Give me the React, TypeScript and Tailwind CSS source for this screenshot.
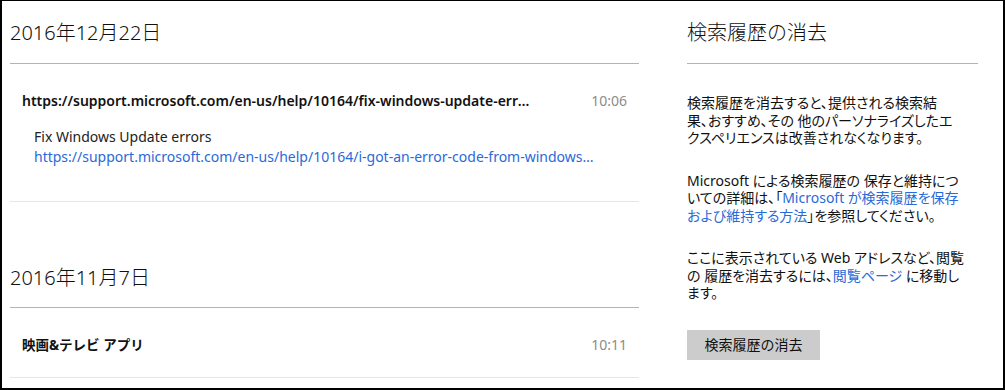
import React from "react";

const font = "font-['Noto_Sans','Noto_Sans_CJK_JP',sans-serif]";

function DateHeading({ children }: { children: React.ReactNode }) {
  return <div className="text-[20px] leading-[28px] font-light text-[#111]">{children}</div>;
}

export default function App() {
  return (
    <div className={`${font} w-[1005px] h-[390px] bg-white border-black border-l-2 border-r-2 border-t border-b-2 flex text-[#111] overflow-hidden`}>
      {/* Left column */}
      <div className="ml-[8px] w-[629px] flex flex-col">
        <div className="pt-[18px]">
          <DateHeading>2016年12月22日</DateHeading>
        </div>
        <div className="mt-[16px] h-px bg-[#b4b4b4]" />
        <div className="pt-[27px] pl-[12px] pr-[12px] flex items-center justify-between">
          <div className="w-[508px] truncate text-[14px] leading-[20px] font-semibold text-[#111]">
            https://support.microsoft.com/en-us/help/10164/fix-windows-update-errors
          </div>
          <div className="text-[14px] leading-[20px] text-[#8c8c8c]">10:06</div>
        </div>
        <div className="pl-[24px] mt-[16px] flex flex-col">
          <div className="text-[14px] leading-[20px] text-[#222]">Fix Windows Update errors</div>
          <div className="w-[564px] truncate text-[14px] leading-[20px] text-[#2a6ad8]">
            https://support.microsoft.com/en-us/help/10164/i-got-an-error-code-from-windows-update
          </div>
        </div>
        <div className="mt-[34px] h-px bg-[#e6e6e6]" />
        <div className="mt-[62px]">
          <DateHeading>2016年11月7日</DateHeading>
        </div>
        <div className="mt-[15px] h-px bg-[#b4b4b4]" />
        <div className="pt-[27px] pl-[12px] pr-[12px] flex items-center justify-between">
          <div className="text-[13.5px] leading-[20px] font-bold text-[#111]">映画&amp;テレビ アプリ</div>
          <div className="text-[14px] leading-[20px] text-[#8c8c8c]">10:11</div>
        </div>
        <div className="mt-[22px] h-px bg-[#e6e6e6]" />
      </div>

      {/* Right column */}
      <div className="ml-[48px] w-[291px] flex flex-col">
        <div className="pt-[18px]">
          <div className="text-[20px] leading-[28px] font-light text-[#111]">検索履歴の消去</div>
        </div>
        <div className="mt-[16px] h-px bg-[#b4b4b4]" />
        <div className="pt-[30px] text-[14px] leading-[17.5px] text-[#111] whitespace-nowrap [font-feature-settings:'palt']">
          <p>
            検索履歴を消去すると、提供される検索結
            <br />
            果、おすすめ、その 他のパーソナライズしたエ
            <br />
            クスペリエンスは改善されなくなります。
          </p>
          <p className="mt-[25px]">
            Microsoft による検索履歴の 保存と維持につ
            <br />
            いての詳細は、「<span className="text-[#2a6ad8]">Microsoft が検索履歴を保存</span>
            <br />
            <span className="text-[#2a6ad8]">および維持する方法</span>」を参照してください。
          </p>
          <p className="mt-[25px]">
            ここに表示されている Web アドレスなど、閲覧
            <br />
            の 履歴を消去するには、<span className="text-[#2a6ad8]">閲覧ページ</span> に移動し
            <br />
            ます。
          </p>
        </div>
        <button className="mt-[28px] w-[133px] h-[30px] bg-[#cccccc] text-[14px] text-[#111] flex items-center justify-center">
          検索履歴の消去
        </button>
      </div>
    </div>
  );
}
